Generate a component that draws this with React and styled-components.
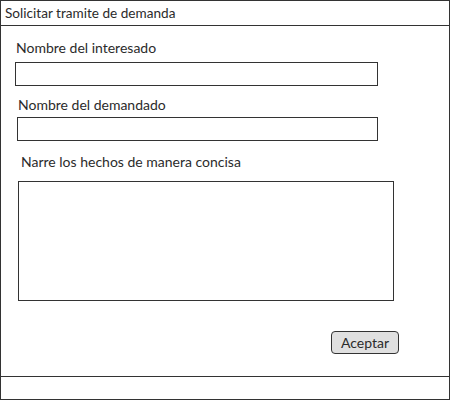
import React from 'react';
import styled, { createGlobalStyle } from 'styled-components';

const GlobalStyle = createGlobalStyle`
  html, body {
    margin: 0;
    padding: 0;
    background: #ffffff;
  }
  body {
    font-family: Lato, "Noto Sans", sans-serif;
    color: #2b2b2b;
  }
`;

// ======================== ventana ========================

const Window = styled.div`
  box-sizing: border-box;
  width: 450px;
  height: 400px;
  border: 1.5px solid #333333;
  display: flex;
  flex-direction: column;
  background: #ffffff;
`;

const TitleBar = styled.div`
  box-sizing: border-box;
  height: 25px;
  border-bottom: 1.5px solid #333333;
  padding-left: 4px;
  display: flex;
  align-items: center;
  font-size: 13.6px;
`;

const Body = styled.div`
  flex: 1;
  display: flex;
  flex-direction: column;
`;

const Footer = styled.div`
  height: 22px;
  border-top: 1.5px solid #333333;
`;

// ======================== formulario ========================

const Field = styled.div`
  display: flex;
  flex-direction: column;
  margin-top: ${(p) => p.top}px;
  padding-left: ${(p) => p.indent}px;
`;

const Label = styled.label`
  font-size: 14px;
  line-height: 16px;
  padding-left: ${(p) => p.shift || 0}px;
  margin-bottom: ${(p) => p.gap}px;
`;

const Input = styled.div`
  box-sizing: border-box;
  width: ${(p) => p.w}px;
  height: ${(p) => p.h}px;
  border: 1.5px solid #333333;
  background: #ffffff;
`;

const Actions = styled.div`
  display: flex;
  justify-content: flex-end;
  padding-right: 50px;
  margin-top: 30px;
`;

const Button = styled.button`
  box-sizing: border-box;
  width: 68px;
  height: 23px;
  border: 1.5px solid #333333;
  border-radius: 4px;
  background: #e0e0e0;
  font-family: Lato, "Noto Sans", sans-serif;
  font-size: 14px;
  color: #2b2b2b;
  padding: 0;
`;

const App = () => {
  return (
    <>
      <GlobalStyle />
      <Window>
        <TitleBar>Solicitar tramite de demanda</TitleBar>
        <Body>
          <Field top={14} indent={14}>
            <Label shift={1} gap={6}>Nombre del interesado</Label>
            <Input w={363} h={24} />
          </Field>
          <Field top={11} indent={16}>
            <Label shift={1} gap={4}>Nombre del demandado</Label>
            <Input w={361} h={24} />
          </Field>
          <Field top={13} indent={17}>
            <Label shift={3} gap={11}>Narre los hechos de manera concisa</Label>
            <Input w={376} h={120} />
          </Field>
          <Actions>
            <Button>Aceptar</Button>
          </Actions>
        </Body>
        <Footer />
      </Window>
    </>
  );
};

export default App;
